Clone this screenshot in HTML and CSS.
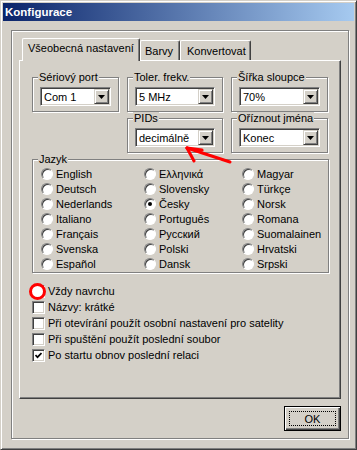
FILE: index.html
```html
<!DOCTYPE html>
<html lang="cs">
<head>
    <meta charset="UTF-8">
    <title>Konfigurace</title>
    <link rel="stylesheet" href="styles.css">
</head>
<body>
    <div class="window">
        <div class="titlebar">Konfigurace</div>

        <div class="frame">
            <div class="tabs">
                <div class="tab active">Všeobecná nastavení</div>
                <div class="tab tab-barvy">Barvy</div>
                <div class="tab tab-konv">Konvertovat</div>
            </div>

            <div class="panel">
                <div class="top-grid">
                    <fieldset class="group">
                        <legend>Sériový port</legend>
                        <div class="combo">Com 1<span class="combo-btn"></span></div>
                    </fieldset>
                    <fieldset class="group">
                        <legend>Toler. frekv.</legend>
                        <div class="combo">5 MHz<span class="combo-btn"></span></div>
                    </fieldset>
                    <fieldset class="group">
                        <legend>Šířka sloupce</legend>
                        <div class="combo">70%<span class="combo-btn"></span></div>
                    </fieldset>
                    <fieldset class="group col-2">
                        <legend>PIDs</legend>
                        <div class="combo">decimálně<span class="combo-btn"></span></div>
                    </fieldset>
                    <fieldset class="group">
                        <legend>Oříznout jména</legend>
                        <div class="combo">Konec<span class="combo-btn"></span></div>
                    </fieldset>
                </div>

                <fieldset class="group lang-group">
                    <legend>Jazyk</legend>
                    <div class="langs">
                        <div class="radio"><span class="dot"></span>English</div>
                        <div class="radio"><span class="dot"></span>Deutsch</div>
                        <div class="radio"><span class="dot"></span>Nederlands</div>
                        <div class="radio"><span class="dot"></span>Italiano</div>
                        <div class="radio"><span class="dot"></span>Français</div>
                        <div class="radio"><span class="dot"></span>Svenska</div>
                        <div class="radio"><span class="dot"></span>Español</div>

                        <div class="radio"><span class="dot"></span>Ελληνικά</div>
                        <div class="radio"><span class="dot"></span>Slovensky</div>
                        <div class="radio"><span class="dot checked"></span>Česky</div>
                        <div class="radio"><span class="dot"></span>Português</div>
                        <div class="radio"><span class="dot"></span>Русский</div>
                        <div class="radio"><span class="dot"></span>Polski</div>
                        <div class="radio"><span class="dot"></span>Dansk</div>

                        <div class="radio"><span class="dot"></span>Magyar</div>
                        <div class="radio"><span class="dot"></span>Türkçe</div>
                        <div class="radio"><span class="dot"></span>Norsk</div>
                        <div class="radio"><span class="dot"></span>Romana</div>
                        <div class="radio"><span class="dot"></span>Suomalainen</div>
                        <div class="radio"><span class="dot"></span>Hrvatski</div>
                        <div class="radio"><span class="dot"></span>Srpski</div>
                    </div>
                </fieldset>

                <div class="checks">
                    <div class="check"><span class="box"><span class="ring"></span></span>Vždy navrchu</div>
                    <div class="check"><span class="box"></span>Názvy: krátké</div>
                    <div class="check"><span class="box"></span>Při otevírání použít osobní nastavení pro satelity</div>
                    <div class="check"><span class="box"></span>Při spuštění použít poslední soubor</div>
                    <div class="check">
                        <span class="box">
                            <svg width="7" height="7" viewBox="0 0 7 7"><path d="M0.5 3 L2.5 5.2 L6.5 1" fill="none" stroke="#000" stroke-width="1.7"/></svg>
                        </span>Po startu obnov poslední relaci
                    </div>
                </div>
            </div>

            <div class="actions">
                <button class="ok-btn">OK</button>
            </div>
        </div>

        <!-- red annotation arrow pointing at the PIDs combo -->
        <svg class="arrow" width="56" height="26" viewBox="0 0 56 26">
            <g stroke="#f00" stroke-width="3" stroke-linecap="round" fill="none">
                <path d="M8 7 L51 21"/>
                <path d="M8 7 L23 9"/>
                <path d="M8 7 L15 20"/>
            </g>
        </svg>
    </div>
</body>
</html>
```

FILE: styles.css
```css
body {
    margin: 0;
    font-family: "Liberation Sans", Arial, sans-serif;
    font-size: 11px;
    color: #000;
    background: #d4d0c8;
}

.window {
    position: relative;
    width: 357px;
    height: 450px;
    box-sizing: border-box;
    padding: 2px;
    background: #d4d0c8;
    border: 1px solid;
    border-color: #d4d0c8 #404040 #404040 #d4d0c8;
    box-shadow: inset 1px 1px #fff, inset -1px -1px #808080;
}

.titlebar {
    height: 18px;
    line-height: 18px;
    padding-left: 2px;
    color: #fff;
    font-weight: bold;
    font-size: 11.5px;
    background: linear-gradient(to right, #0a246a, #a6caf0);
}

.frame {
    width: 338px;
    height: 409px;
    box-sizing: border-box;
    margin: 9px 0 0 8px;
    padding: 7px 7px 0 7px;
    border: 1px solid #808080;
    box-shadow: inset 1px 1px #fff, 1px 1px #fff;
}

.tabs {
    display: flex;
    align-items: flex-end;
    height: 22px;
    padding-left: 3px;
    position: relative;
    z-index: 1;
}

.tab {
    height: 20px;
    box-sizing: border-box;
    padding: 4px 0 0 5px;
    background: #d4d0c8;
    border-left: 1px solid #fff;
    border-top: 1px solid #fff;
    border-right: 1px solid #404040;
    border-radius: 2px 2px 0 0;
    box-shadow: inset -1px 0 #808080;
    white-space: nowrap;
}

.tab.active {
    width: 118px;
    height: 23px;
    margin-bottom: -1px;
    padding-top: 3px;
}

.tab-barvy {
    width: 40px;
    padding-left: 4px;
}

.tab-konv {
    width: 71px;
    padding-left: 6px;
}

.panel {
    width: 322px;
    height: 339px;
    box-sizing: border-box;
    padding: 10px 11px 0 12px;
    border: 1px solid;
    border-color: #fff #404040 #404040 #fff;
    box-shadow: inset -1px -1px #808080;
}

.top-grid {
    display: grid;
    grid-template-columns: 87px 96px 97px;
    column-gap: 8px;
}

.col-2 {
    grid-column: 2;
}

.group {
    margin: 0;
    min-width: 0;
    padding: 3px 7px 5px 7px;
    border: 1px solid #808080;
    box-shadow: inset 1px 1px #fff, 1px 1px #fff;
}

.group legend {
    padding: 0 1px;
    margin-left: -2px;
    line-height: 13px;
    background: #d4d0c8;
}

.combo {
    display: flex;
    align-items: center;
    height: 19px;
    box-sizing: border-box;
    padding-left: 3px;
    background: #fff;
    border: 1px solid;
    border-color: #808080 #fff #fff #808080;
    box-shadow: inset 1px 1px #404040, inset -1px -1px #d4d0c8;
    white-space: nowrap;
}

.combo-btn {
    display: flex;
    align-items: center;
    justify-content: center;
    flex: none;
    width: 15px;
    height: 15px;
    box-sizing: border-box;
    margin-left: auto;
    margin-right: 1px;
    background: #d4d0c8;
    border: 1px solid;
    border-color: #d4d0c8 #404040 #404040 #d4d0c8;
    box-shadow: inset 1px 1px #fff, inset -1px -1px #808080;
}

.combo-btn::after {
    content: "";
    width: 7px;
    height: 4px;
    margin-top: 1px;
    background: #000;
    clip-path: polygon(0 0, 100% 0, 50% 100%);
}

.lang-group {
    padding: 0 0 1px 8px;
}

.lang-group legend {
    margin-left: -3px;
}

.langs {
    display: grid;
    grid-template-columns: 103px 98px 1fr;
    grid-template-rows: repeat(7, 15px);
    grid-auto-flow: column;
}

.radio {
    display: flex;
    align-items: center;
    gap: 3px;
    white-space: nowrap;
}

.dot {
    position: relative;
    width: 12px;
    height: 12px;
    box-sizing: border-box;
    border-radius: 50%;
    background: #fff;
    border: 1px solid;
    border-color: #808080 #fff #fff #808080;
    box-shadow: inset 1px 1px #404040;
}

.dot.checked::after {
    content: "";
    position: absolute;
    left: 3px;
    top: 3px;
    width: 4px;
    height: 4px;
    border-radius: 50%;
    background: #000;
}

.checks {
    margin-top: 10px;
}

.check {
    display: flex;
    align-items: center;
    gap: 3px;
    height: 16px;
    white-space: nowrap;
}

.box {
    position: relative;
    display: flex;
    align-items: center;
    justify-content: center;
    width: 13px;
    height: 13px;
    box-sizing: border-box;
    background: #fff;
    border: 1px solid;
    border-color: #808080 #fff #fff #808080;
    box-shadow: inset 1px 1px #404040, inset -1px -1px #d4d0c8;
}

.box svg {
    display: block;
}

/* red annotation ring over the first checkbox */
.ring {
    position: absolute;
    left: -4px;
    top: -3px;
    width: 17px;
    height: 17px;
    box-sizing: border-box;
    border: 3px solid #f00;
    border-radius: 50%;
    background: #fff;
}

.actions {
    display: flex;
    justify-content: flex-end;
    width: 322px;
    margin-top: 7px;
}

.ok-btn {
    position: relative;
    width: 57px;
    height: 25px;
    padding: 0;
    font-family: inherit;
    font-size: 11px;
    color: #000;
    background: #d4d0c8;
    border: 1px solid #000;
    box-shadow: inset 1px 1px #fff, inset -1px -1px #404040, inset -2px -2px #808080;
}

.ok-btn::after {
    content: "";
    position: absolute;
    left: 4px;
    top: 4px;
    right: 4px;
    bottom: 4px;
    border: 1px dotted #000;
}

.arrow {
    position: absolute;
    left: 178px;
    top: 140px;
}
```
